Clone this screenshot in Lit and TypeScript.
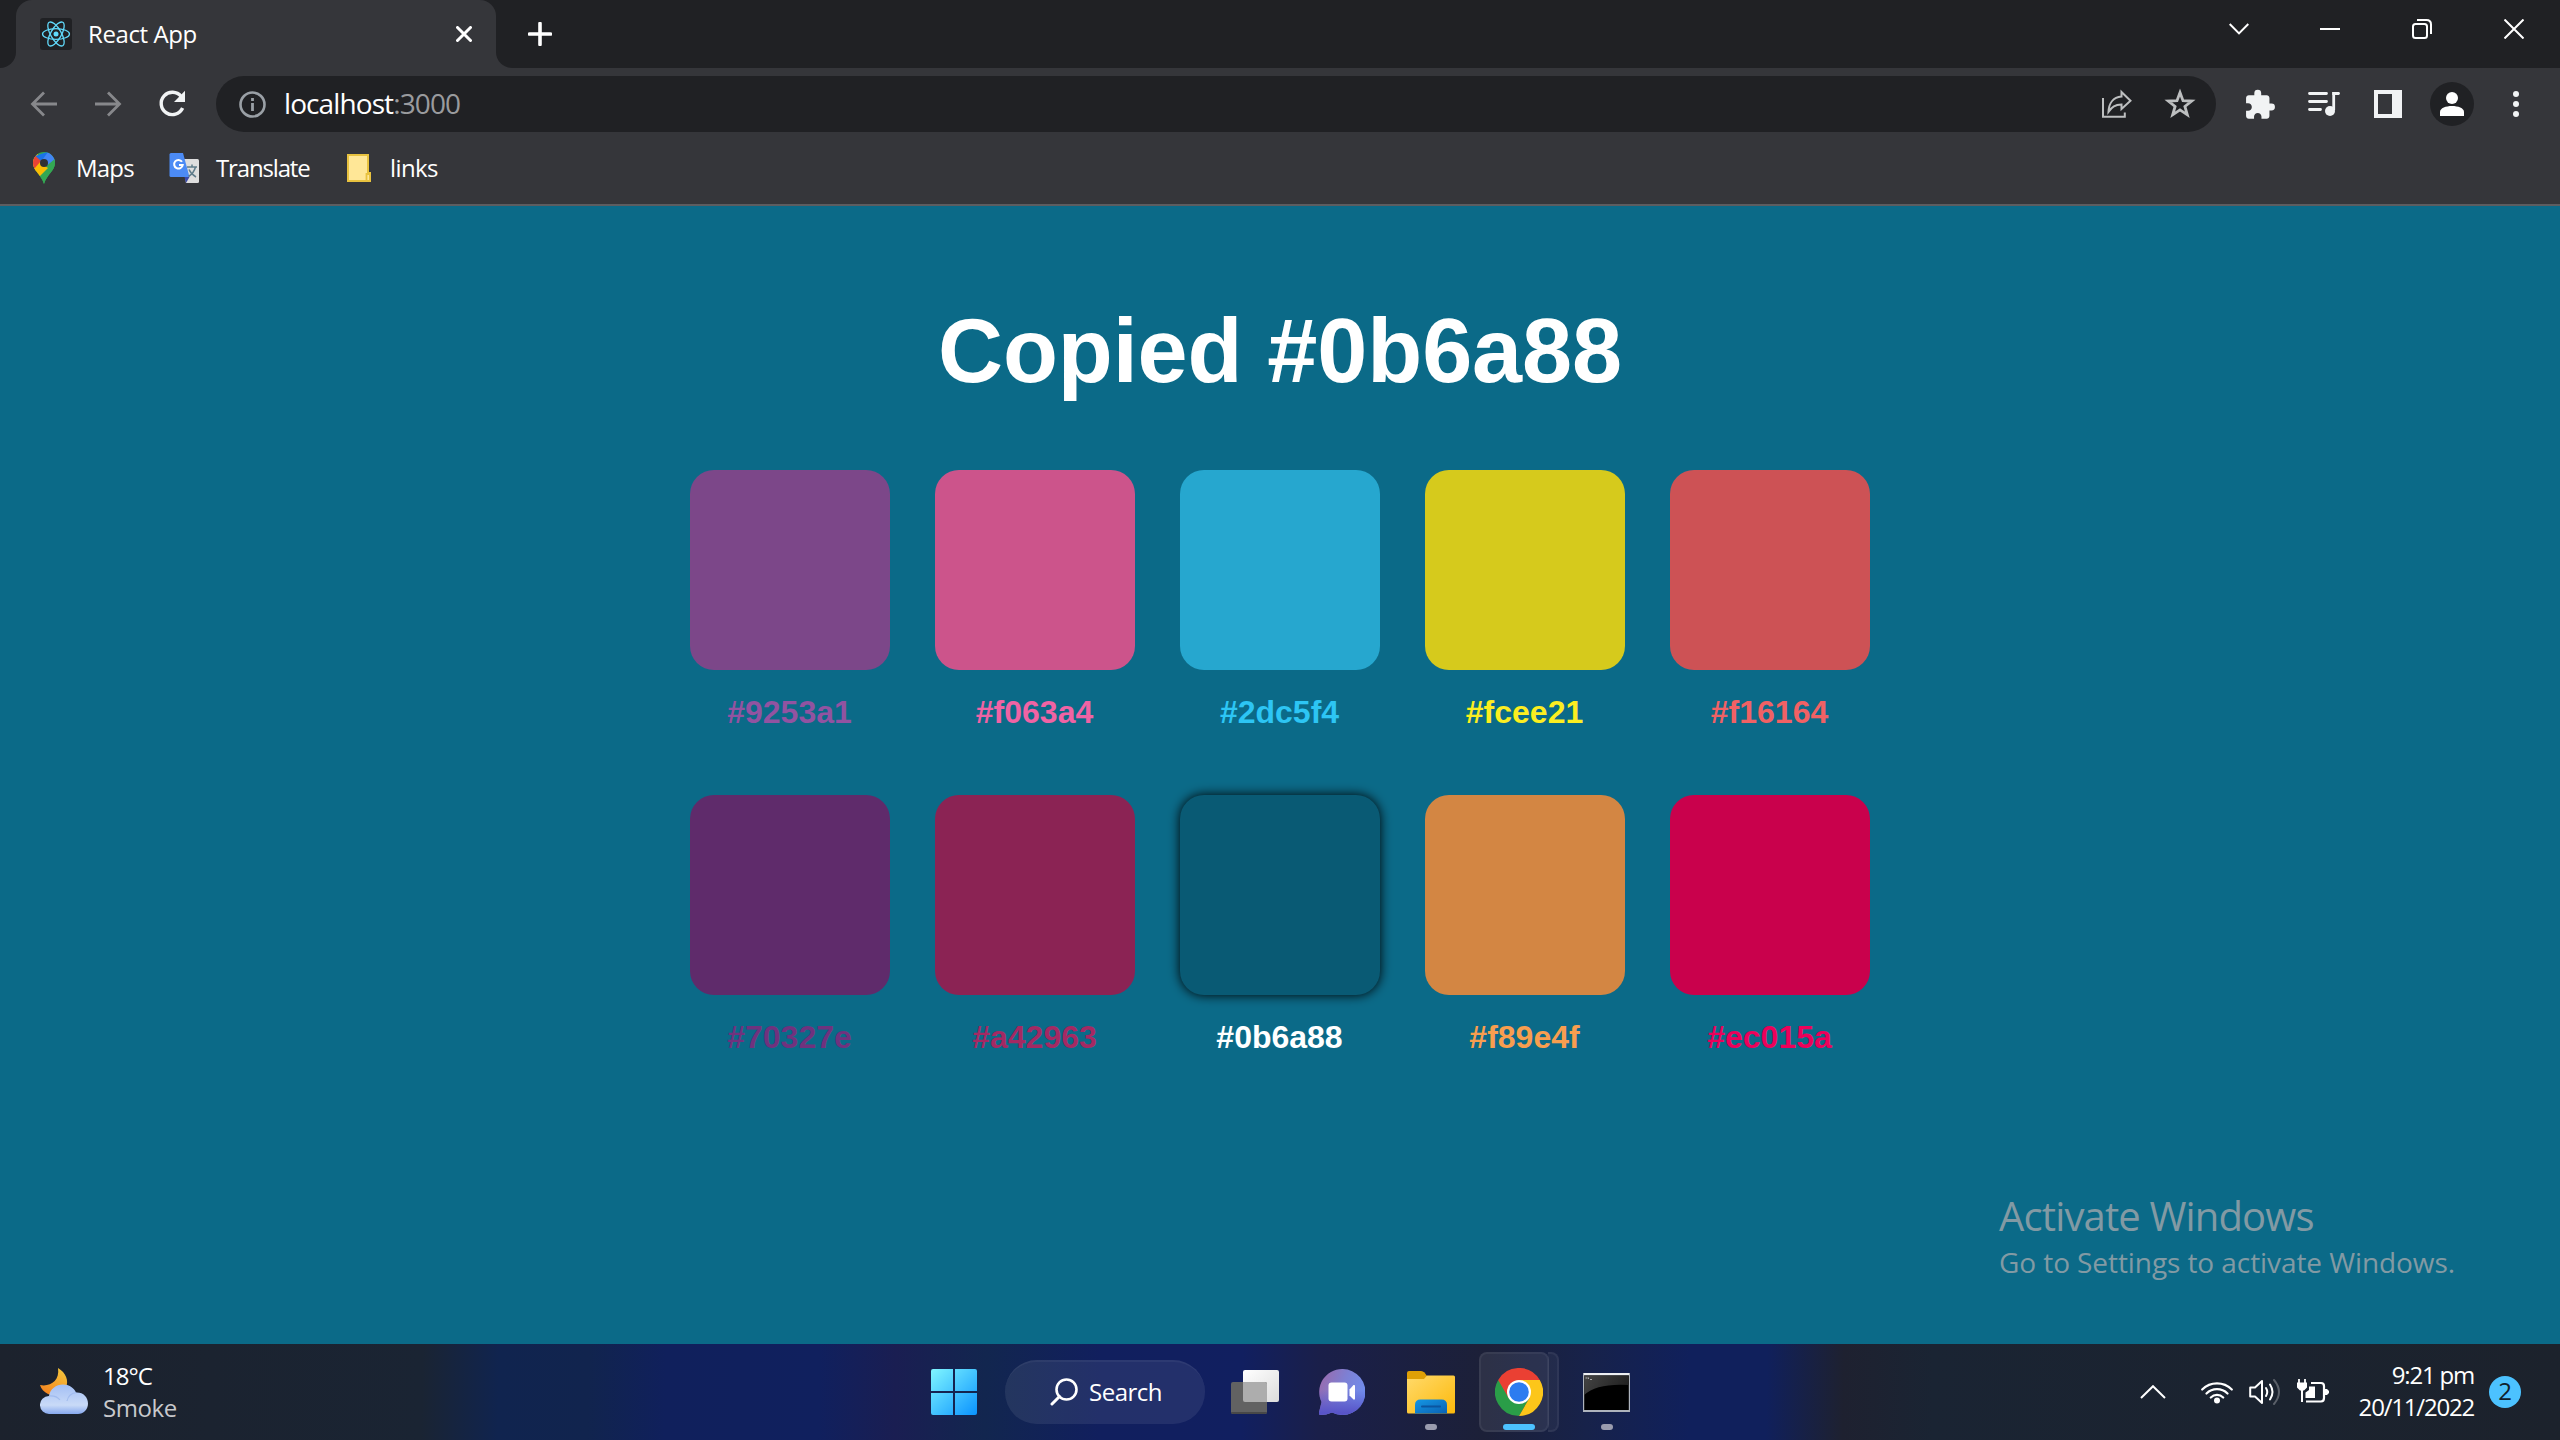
import { LitElement, html, css, svg } from "lit";
import { customElement, property } from "lit/decorators.js";
import { styleMap } from "lit/directives/style-map.js";
import { classMap } from "lit/directives/class-map.js";

const COLORS = [
  "#9253a1", "#f063a4", "#2dc5f4", "#fcee21", "#f16164",
  "#70327e", "#a42963", "#0b6a88", "#f89e4f", "#ec015a",
];

const UI_FONT = css`"Open Sans", "Noto Sans", sans-serif`;

const icon = (w: number, h: number, body: unknown, box = `0 0 ${w} ${h}`) =>
  html`<svg width=${w} height=${h} viewBox=${box} fill="none">${body}</svg>`;

const shared = css`
  * { box-sizing: border-box; }
  svg { display: block; flex: none; }
  .cell { display: flex; align-items: center; justify-content: center; flex: none; }
`;

@customElement("browser-header")
class BrowserHeader extends LitElement {
  static styles = [shared, css`
    :host { display: block; height: 206px; background: #35363a; border-bottom: 2px solid #5c5d60; font-family: ${UI_FONT}; color: #fff; }
    .strip { display: flex; height: 68px; background: #202124; }
    .edge { width: 16px; background: #35363a; }
    .edge i { display: block; height: 68px; background: #202124; }
    .edge.left i { border-bottom-right-radius: 16px; }
    .edge.right i { border-bottom-left-radius: 16px; }
    .tab { width: 480px; display: flex; align-items: center; padding: 0 24px; background: #35363a; border-radius: 16px 16px 0 0; }
    .title { flex: 1; padding: 0 0 2px 16px; font-size: 24px; letter-spacing: -0.4px; }
    .plus { width: 56px; }
    .fill { flex: 1; }
    .win { width: 92px; height: 58px; }
    .win.chev { padding-left: 2px; }
    .toolbar { display: flex; height: 72px; padding: 8px 12px; align-items: center; }
    .tool { width: 64px; height: 56px; }
    .omni { flex: 1; display: flex; align-items: center; height: 56px; margin: 0 12px; padding: 0 4px 0 22px; border-radius: 28px; background: #202124; }
    .url { flex: 1; padding: 0 0 2px 16px; font-size: 28px; letter-spacing: -0.9px; }
    .port { color: #9a9b9e; }
    .avatar { width: 44px; height: 44px; border-radius: 50%; background: #202124; }
    .bookmarks { display: flex; height: 56px; padding-left: 28px; align-items: center; font-size: 24px; }
    .bm { display: flex; align-items: center; }
    .bm span { padding-bottom: 2px; white-space: nowrap; }
    .maps { width: 140px; } .maps span { padding-left: 16px; letter-spacing: -0.8px; }
    .trans { width: 177px; } .trans span { padding-left: 16px; letter-spacing: -1.15px; }
    .links span { padding-left: 15px; letter-spacing: -0.6px; }
  `];

  render() {
    return html`
      <div class="strip">
        <div class="edge left"><i></i></div>
        <div class="tab">
          ${icon(32, 32, svg`<rect width="32" height="32" rx="3" fill="#202124"/>
            <g stroke="#61dafb" stroke-width="1.3"><ellipse cx="16" cy="16" rx="13.5" ry="5.3"/>
            <ellipse cx="16" cy="16" rx="13.5" ry="5.3" transform="rotate(60 16 16)"/>
            <ellipse cx="16" cy="16" rx="13.5" ry="5.3" transform="rotate(120 16 16)"/></g>
            <circle cx="16" cy="16" r="2.5" fill="#61dafb"/>`)}
          <div class="title">React App</div>
          ${icon(16, 16, svg`<path d="M1.5 1.5 14.5 14.5M14.5 1.5 1.5 14.5" stroke="#fff" stroke-width="3" stroke-linecap="round"/>`)}
        </div>
        <div class="edge right"><i></i></div>
        <div class="cell plus">${icon(24, 24, svg`<path d="M12 1.5V22.5M1.5 12H22.5" stroke="#fff" stroke-width="3.6" stroke-linecap="round"/>`)}</div>
        <div class="fill"></div>
        <div class="cell win chev">${icon(20, 12, svg`<path d="M.7 1 10 10.4 19.3 1" stroke="#fff" stroke-width="2"/>`)}</div>
        <div class="cell win">${icon(20, 2, svg`<path d="M0 1H20" stroke="#fff" stroke-width="2"/>`)}</div>
        <div class="cell win">${icon(20, 20, svg`<rect x="1" y="5" width="14" height="14" rx="2.5" stroke="#fff" stroke-width="2"/><path d="M5 1H14.5Q19 1 19 5.5V15" stroke="#fff" stroke-width="2"/>`)}</div>
        <div class="cell win">${icon(20, 20, svg`<path d="M.5.5 19.5 19.5M19.5.5.5 19.5" stroke="#fff" stroke-width="2"/>`)}</div>
      </div>
      <div class="toolbar">
        <div class="cell tool">${icon(28, 26, svg`<path d="M27 13H2.5M14 1.5 2.5 13 14 24.5" stroke="#87888b" stroke-width="2.8"/>`)}</div>
        <div class="cell tool">${icon(28, 26, svg`<path d="M1 13H25.5M14 1.5 25.5 13 14 24.5" stroke="#87888b" stroke-width="2.8"/>`)}</div>
        <div class="cell tool">${icon(28, 28, svg`<path d="M23.2 6.5A11.2 11.2 0 1 0 24.6 18" stroke="#f1f3f4" stroke-width="3.4"/><path d="M27 .8V12H16Z" fill="#f1f3f4"/>`)}</div>
        <div class="omni">
          ${icon(30, 30, svg`<circle cx="14.500" cy="15.500" r="12" stroke="#9aa0a6" stroke-width="2.6"/><path d="M14.500 13.9V22M14.500 9.100V11.900" stroke="#9aa0a6" stroke-width="2.8"/>`)}
          <div class="url">localhost<span class="port">:3000</span></div>
          <div class="cell tool">${icon(32, 32, svg`<path d="M3 10V28.8H24.8V24.5" stroke="#bdbfc0" stroke-width="2"/><path d="M21.500 4 30.500 12.8 21.500 21V16.5C15 16.7 12 19 8.500 23.8 8.900 15.5 13 9.2 21.500 8.6Z" stroke="#bdbfc0" stroke-width="2"/>`)}</div>
          <div class="cell tool">${icon(32, 32, svg`<path d="M16 4.6 19 12.7 27.7 13 20.9 18.4 23.3 26.8 16 21.9 8.7 26.8 11.1 18.4 4.3 13 13 12.7Z" stroke="#bdbfc0" stroke-width="2.8"/>`)}</div>
        </div>
        <div class="cell tool">${icon(33, 33, svg`<path fill="#f1f3f4" d="M20.5 11H19V7c0-1.1-.9-2-2-2h-4V3.5a2.5 2.5 0 0 0-5 0V5H4c-1.1 0-2 .9-2 2v3.8h1.5c1.5 0 2.7 1.2 2.7 2.7S5 16.2 3.5 16.2H2V20c0 1.1.9 2 2 2h3.8v-1.5c0-1.5 1.2-2.7 2.7-2.7s2.7 1.2 2.7 2.7V22H17c1.1 0 2-.9 2-2v-4h1.5a2.5 2.5 0 0 0 0-5z"/>`, "0.5 -0.3 24 24")}</div>
        <div class="cell tool">${icon(32, 26, svg`<g stroke="#f1f3f4" stroke-width="2.8" stroke-linecap="round"><path d="M1.5 2.5H18.5M1.5 10.5H18.5M1.5 18.5H12.5"/><path d="M25.7 19V2.5H30.5" stroke-linecap="butt"/></g><path d="M24.3 1.1H30.5A1.4 1.4 0 0 1 30.5 3.9H24.3Z" fill="#f1f3f4"/><circle cx="22" cy="20" r="5" fill="#f1f3f4"/>`)}</div>
        <div class="cell tool">${icon(28, 28, svg`<path fill="#f1f3f4" fill-rule="evenodd" d="M0 0H28V28H0ZM4 4V24H18V4Z"/>`)}</div>
        <div class="cell tool"><div class="cell avatar">${icon(24, 24, svg`<circle cx="12" cy="6" r="6" fill="#fff"/><path d="M0 24V20C0 16 6 14 12 14S24 16 24 20V24Z" fill="#fff"/>`)}</div></div>
        <div class="cell tool">${icon(6, 26, svg`<circle cx="3" cy="3" r="3" fill="#f1f3f4"/><circle cx="3" cy="13" r="3" fill="#f1f3f4"/><circle cx="3" cy="23" r="3" fill="#f1f3f4"/>`)}</div>
      </div>
      <div class="bookmarks">
        <div class="bm maps">${icon(32, 32, svg`<clipPath id="pin"><path d="M16 0A11 11 0 0 0 5 11C5 19 13 22 16 32 19 22 27 19 27 11A11 11 0 0 0 16 0Z"/></clipPath>
          <g clip-path="url(#pin)"><rect width="32" height="32" fill="#34a853"/><path d="M0 0H8L16 11 6 22 0 25Z" fill="#fbbc04"/><path d="M7 4 19 0 20 1 13 11Z" fill="#1a73e8"/><path d="M20 0 30 6 16 22 12 11Z" fill="#4285f4"/><path d="M28 6 30 32H13L9 22Z" fill="#34a853"/><path d="M4.5 17 12 11 20 16 11 25Z" fill="#fbbc04"/><path d="M0 4 7 3.5 13 9 6 17 0 17Z" fill="#ea4335"/></g><circle cx="16" cy="11" r="4" fill="#303134"/>`)}<span>Maps</span></div>
        <div class="bm trans">${icon(32, 32, svg`<path d="M14 7H29.5Q31 7 31 8.5V29.5Q31 31 29.5 31H18Z" fill="#dedede"/><path d="M3 1H15L21.5 25H3Q1.500 25 1.500 23.500V2.500Q1.500 1 3 1Z" fill="#4c8bf5"/><path d="M16.500 25H21.500L18 31Z" fill="#3949ab"/>
          <path d="M14 9.800A4.300 4.300 0 1 0 14.700 13H11" stroke="#fff" stroke-width="2"/><path d="M19 15H29M24 12.500V15M27.500 15Q26 21 20.500 24.500M21 17.500Q23 22 28 25" stroke="#607d8b" stroke-width="1.500"/>`)}<span>Translate</span></div>
        <div class="bm links">${icon(30, 32, svg`<path d="M3 3H23V21H25V29H3Z" fill="#ffe797" stroke="#e8c23f" stroke-width="2"/><path d="M21.500 29V22H24" stroke="#e8c23f" stroke-width="1.800"/>`)}<span>links</span></div>
      </div>`;
  }
}

@customElement("color-swatch")
class ColorSwatch extends LitElement {
  @property() color = "";
  @property({ type: Boolean }) active = false;

  static styles = [shared, css`
    :host { display: block; width: 200px; text-align: center; }
    .box { height: 200px; border-radius: 24px; filter: brightness(0.85); }
    .box.active { box-shadow: 0 0 12px #000; }
    .label { margin-top: 24px; padding-right: 1px; font: bold 32px/36px "Liberation Sans", Arial, sans-serif; }
  `];

  render() {
    return html`
      <div class=${classMap({ box: true, active: this.active })} style=${styleMap({ background: this.color })}></div>
      <div class="label" style=${styleMap({ color: this.active ? "#fff" : this.color })}>${this.color}</div>`;
  }
}

@customElement("task-bar")
class TaskBar extends LitElement {
  static styles = [shared, css`
    :host {
      display: grid; grid-template-columns: 910px 741px 1fr; height: 96px; align-items: center;
      font: 24px/32px ${UI_FONT}; color: #fff;
      background: linear-gradient(91deg, #1c222d 0%, #1a2433 16.5%, #10244f 19.500%, #11244e 23%, #10205c 26%, #10205e 32%, #1a1e52 35%, #12264f 38.500%, #111f5e 43%, #111f60 48.500%, #1a1f4a 51.500%, #1c2038 58%, #17224a 62%, #10205c 66%, #10205c 69%, #1e2130 72%, #1a2433 75.500%, #1c222c 100%);
    }
    .weather { display: flex; align-items: center; gap: 15px; padding-left: 40px; }
    .temp { letter-spacing: -1px; }
    .cond { letter-spacing: -0.4px; color: #c8c9cc; }
    .apps { display: flex; height: 96px; align-items: center; }
    .app { width: 88px; height: 96px; position: relative; }
    .app.chat { padding-right: 2px; }
    .app.term { padding-right: 1px; }
    .search { width: 200px; height: 64px; margin: 0 6px 0 7px; border-radius: 32px; background: #ffffff14; border-top: 2px solid #ffffff0c; gap: 11px; padding: 0 0 2px 2px; letter-spacing: -0.5px; }
    .mark { position: absolute; bottom: 10px; left: 38px; width: 12px; height: 6px; border-radius: 3px; background: #9a9cae; }
    .mark.on { left: 28px; width: 32px; background: #4cc2ff; }
    .plate { position: absolute; left: 4px; top: 8px; width: 70px; height: 80px; border-radius: 8px; background: #ffffff14; border: 2px solid #ffffff0e; }
    .plate2 { position: absolute; left: 73px; top: 8px; width: 11px; height: 80px; border-radius: 0 8px 8px 0; background: #ffffff0c; border: 2px solid #ffffff0e; border-left: 0; }
    .app svg { position: relative; }
    .tray { display: flex; align-items: center; justify-content: flex-end; padding-right: 39px; }
    .tray svg { margin-right: 16px; }
    .tray svg.up { margin-right: 35px; }
    .clock { width: 129px; text-align: right; letter-spacing: -1.2px; margin: -2px 15px 0 0; }
    .badge { width: 32px; height: 32px; border-radius: 50%; background: #4cc2ff; color: #10202c; }
    .badge span { margin-top: -2px; }
  `];

  render() {
    return html`
      <div class="weather">
        ${icon(48, 48, svg`<defs><linearGradient id="moon" x1="0" y1="1" x2=".6" y2="0"><stop stop-color="#f47b1b"/><stop offset="1" stop-color="#f4c03a"/></linearGradient>
          <linearGradient id="cl" x1="0" y1="0" x2="0" y2="1"><stop stop-color="#a3bff5"/><stop offset=".7" stop-color="#c9daf7"/><stop offset="1" stop-color="#86a8ee"/></linearGradient></defs>
          <path d="M18 0C26 5 29 12 26 20 22 27 14 29 8 26 4 24 1 21 0 17 10 19 20 13 18 0Z" fill="url(#moon)"/>
          <path d="M9 46A9 9 0 0 1 0 37.500 9 9 0 0 1 9 28C10 21 16 16.500 23 16.500 29 16.500 34 20 36 24.500 43 24 48 29 48 35.500 48 41.500 43.500 46 38 46Z" fill="url(#cl)"/>
          <path d="M27 33C28 28 32 25 36.500 24.500M9 28C14 27.500 18 29.500 20 32" stroke="#8fadea" stroke-width="1.200" opacity=".6"/>`)}
        <div><div class="temp">18°C</div><div class="cond">Smoke</div></div>
      </div>
      <div class="apps">
        <div class="cell app">${icon(46, 46, svg`<defs><linearGradient id="win" gradientUnits="userSpaceOnUse" x1="0" y1="0" x2="46" y2="46"><stop stop-color="#80f6ff"/><stop offset="1" stop-color="#0a93ff"/></linearGradient></defs>
          <path d="M2 0H22V22H0V2Q0 0 2 0ZM24 0H44Q46 0 46 2V22H24ZM0 24H22V46H2Q0 46 0 44ZM24 24H46V44Q46 46 44 46H24Z" fill="url(#win)"/>`)}</div>
        <div class="cell search">${icon(28, 28, svg`<circle cx="16.500" cy="11.500" r="10" stroke="#fff" stroke-width="2.600"/><path d="M9.500 18.500 2 26" stroke="#fff" stroke-width="3" stroke-linecap="round"/>`)}<span>Search</span></div>
        <div class="cell app">${icon(48, 44, svg`<defs><linearGradient id="tv" x1="0" y1="0" x2="1" y2="1"><stop stop-color="#fff"/><stop offset="1" stop-color="#dcdcdc"/></linearGradient></defs>
          <rect x="12" width="36" height="32" rx="2" fill="url(#tv)"/><rect y="12" width="36" height="32" rx="2" fill="#626262"/><path d="M12 12H34Q36 12 36 14V32H14Q12 32 12 30Z" fill="#adadad"/><path d="M0 42H36Q36 44 34 44H2Q0 44 0 42Z" fill="#484848"/>`)}</div>
        <div class="cell app chat">${icon(46, 46, svg`<defs><linearGradient id="chat" x1="0" y1=".2" x2="1" y2=".6"><stop stop-color="#9a6aac"/><stop offset=".5" stop-color="#7d80d4"/><stop offset="1" stop-color="#6f8ff0"/></linearGradient><linearGradient id="chat2" x1="0" y1="0" x2="0" y2="1"><stop offset=".45" stop-color="#5854c8" stop-opacity="0"/><stop offset=".95" stop-color="#5854c8"/></linearGradient></defs>
          <path d="M23 0A23 23 0 1 1 13 43.500Q7 46 1.500 46-.5 46 0 43.500L2.500 33A23 23 0 0 1 23 0Z" fill="url(#chat)"/><path d="M23 0A23 23 0 1 1 13 43.500Q7 46 1.500 46-.5 46 0 43.500L2.500 33A23 23 0 0 1 23 0Z" fill="url(#chat2)"/>
          <rect x="9.500" y="13.500" width="19" height="19" rx="3" fill="#fff"/><path d="M30.500 20.500 34.500 16Q36 15.500 36 17V29.500Q36 31 34.500 30.500L30.500 26.500Z" fill="#fff"/>`)}</div>
        <div class="cell app">${icon(48, 44, svg`<defs><linearGradient id="fo" x1="0" y1="0" x2="1" y2="1"><stop stop-color="#ffda6b"/><stop offset="1" stop-color="#fdb90b"/></linearGradient><linearGradient id="fb" x1="0" y1="0" x2="1" y2="1"><stop stop-color="#1597e4"/><stop offset="1" stop-color="#0a62b4"/></linearGradient></defs>
          <path d="M0 3Q0 1 2 1H14Q16 1 17.500 2.500L20 6V12H0Z" fill="#dfa006"/><path d="M0 9H17L20 5.500H46.500Q48 5.500 48 7V42Q48 43.500 46.500 43.500H1.500Q0 43.500 0 42Z" fill="url(#fo)"/>
          <path d="M8 43.500V35Q8 29.500 13.500 29.500H34.500Q40 29.500 40 35V43.500Z" fill="url(#fb)"/><path d="M15 36.500H33" stroke="#0b55a0" stroke-width="2" stroke-linecap="round"/>`)}<div class="mark"></div></div>
        <div class="cell app"><div class="plate"></div><div class="plate2"></div>${icon(48, 48, svg`<path d="M24 24 3.200 12A24 24 0 0 0 24 48L34.400 30Z" fill="#2a9d48"/><path d="M44.800 12A24 24 0 0 1 24 48L34.400 30 24 12Z" fill="#fcc61a"/><path d="M3.200 12A24 24 0 0 1 44.800 12H24L13.600 30Z" fill="#ea4033"/>
          <circle cx="24" cy="24" r="12" fill="#fff"/><circle cx="24" cy="24" r="9.800" fill="#2d7cf0"/>`)}<div class="mark on"></div></div>
        <div class="cell app term">${icon(47, 39, svg`<defs><linearGradient id="tm" x1="0" y1="0" x2="1" y2=".3"><stop stop-color="#444"/><stop offset="1" stop-color="#222"/></linearGradient></defs><rect width="47" height="39" fill="#aeb4bd"/><rect x="1" width="45" height="2" fill="#eef0f3"/><rect x="1.200" y="2.500" width="44.600" height="34.500" fill="#000"/>
          <path d="M1.200 2.500H45.800V12Q14 10 1.200 22Z" fill="url(#tm)"/><path d="M2.500 5H4.500M5.500 4.500V6M7 6.500H9" stroke="#aaa"/>`)}<div class="mark"></div></div>
      </div>
      <div class="tray">
        <svg class="up" width="26" height="14" viewBox="0 0 26 14" fill="none"><path d="M1 13 13 1.200 25 13" stroke="#fff" stroke-width="2"/></svg>
        ${icon(32, 24, svg`<g stroke="#fff" stroke-width="2.200" stroke-linecap="round"><path d="M1.200 9.500A21 21 0 0 1 30.800 9.500M5.500 13.500A15 15 0 0 1 26.500 13.500M9.800 17.500A8.800 8.800 0 0 1 22.200 17.500"/></g><circle cx="16" cy="20.500" r="3" fill="#fff"/>`)}
        ${icon(32, 28, svg`<path d="M1.200 9.500H6L13 3V25L6 18.500H1.200Z" stroke="#fff" stroke-width="2" stroke-linejoin="round"/><g stroke-width="2" stroke-linecap="round"><path d="M17 10Q19.500 14 17 18M21 6.500Q26 14 21 21.500" stroke="#fff"/><path d="M25 2Q35 14 25 26" stroke="#5a5f68"/></g>`)}
        ${icon(32, 28, svg`<path d="M14 5H24Q27 5 27 8V20Q27 23.500 24 23.500H9" stroke="#fff" stroke-width="2.200"/><path d="M28 11H30L32 13V15L30 17H28Z" fill="#fff"/><path d="M2 1V5M8 1V5" stroke="#fff" stroke-width="1.800"/><path d="M0 4.500H10V9.500L7 12.500H3L0 9.500ZM12 8.500H18V20H8.500V14.500L12 12Z" fill="#fff"/><path d="M5 12V24" stroke="#fff" stroke-width="2"/>`)}
        <div class="clock"><div>9:21 pm</div><div>20/11/2022</div></div>
        <div class="cell badge"><span>2</span></div>
      </div>`;
  }
}

@customElement("app-root")
class AppRoot extends LitElement {
  @property() copied = "#0b6a88";

  static styles = [shared, css`
    :host { display: flex; flex-direction: column; width: 2560px; height: 1440px; overflow: hidden; }
    .page { flex: 1; position: relative; background: #0b6a88; padding-top: 93px; }
    h1 { margin: 0 0 67px; text-align: center; color: #fff; font: bold 90px/104px "Liberation Sans", Arial, sans-serif; letter-spacing: -0.1px; }
    .grid { display: grid; grid-template-columns: repeat(5, 200px); gap: 65px 45px; justify-content: center; }
    .watermark { position: absolute; left: 1999px; top: 982px; color: #829aa4; font-family: ${UI_FONT}; white-space: nowrap; }
    .big { font-size: 40px; line-height: 56px; letter-spacing: -0.85px; }
    .small { font-size: 28px; line-height: 36px; letter-spacing: -0.08px; }
  `];

  render() {
    return html`
      <browser-header></browser-header>
      <main class="page">
        <h1>Copied ${this.copied}</h1>
        <div class="grid">
          ${COLORS.map((c) => html`<color-swatch .color=${c} ?active=${c === this.copied}></color-swatch>`)}
        </div>
        <div class="watermark">
          <div class="big">Activate Windows</div>
          <div class="small">Go to Settings to activate Windows.</div>
        </div>
      </main>
      <task-bar></task-bar>`;
  }
}
